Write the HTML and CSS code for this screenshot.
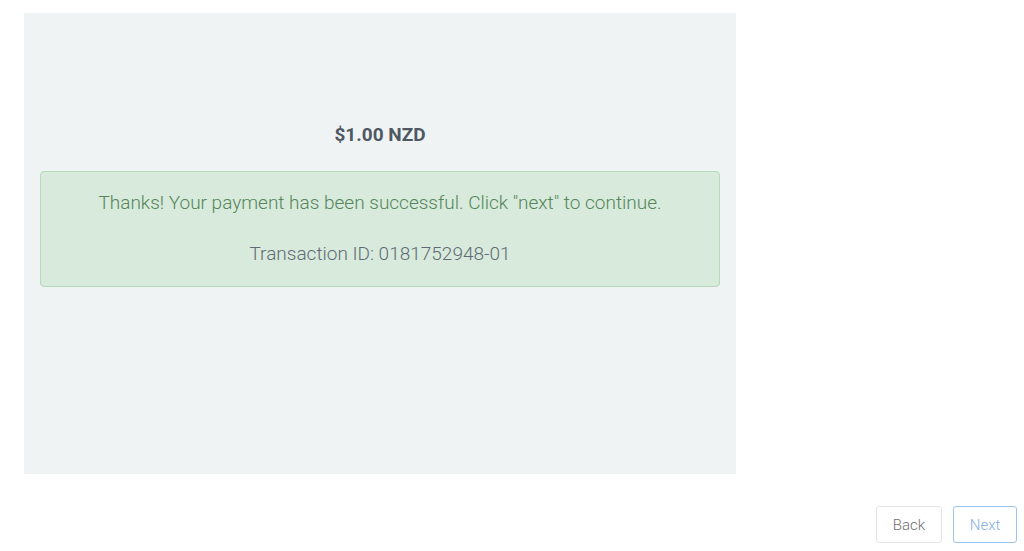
FILE: index.html
```html
<!DOCTYPE html>
<html>
<head>
<meta charset="utf-8">
<link rel="stylesheet" href="styles.css">
</head>
<body>
<div class="panel">
  <div class="amount">$1.00 NZD</div>
  <div class="alert">
    <p class="msg">Thanks! Your payment has been successful. Click "next" to continue.</p>
    <p class="txn">Transaction ID: 0181752948-01</p>
  </div>
</div>
<div class="actions">
  <button class="btn btn-back">Back</button>
  <button class="btn btn-next">Next</button>
</div>
</body>
</html>
```
FILE: styles.css
```css
html, body {
  margin: 0;
  padding: 0;
  background: #ffffff;
  font-family: Roboto, "Liberation Sans", sans-serif;
}
.panel {
  box-sizing: border-box;
  width: 712px;
  height: 461px;
  margin: 13px 0 0 24px;
  padding: 109px 16px 0 16px;
  background: #eff3f3;
}
.amount {
  text-align: center;
  font-size: 19px;
  font-weight: 700;
  line-height: 26px;
  color: #4f5862;
  margin-bottom: 23px;
}
.alert {
  box-sizing: border-box;
  width: 680px;
  padding: 16px 15px 17px;
  background: #d7eadb;
  border: 1px solid #b6d9b9;
  border-radius: 4px;
  text-align: center;
  font-size: 19px;
  font-weight: 300;
  line-height: 30px;
}
.alert p {
  margin: 0;
}
.msg {
  color: #55855a;
  margin-bottom: 21px !important;
}
.txn {
  color: #5f6a76;
}
.actions {
  display: flex;
  justify-content: flex-end;
  gap: 11px;
  margin-top: 32px;
  padding-right: 7px;
}
.btn {
  box-sizing: border-box;
  height: 37px;
  padding: 0;
  background: #ffffff;
  border-radius: 3px;
  font-family: Roboto, "Liberation Sans", sans-serif;
  font-size: 15px;
  font-weight: 300;
}
.btn-back {
  width: 66px;
  border: 1px solid #e3e6e8;
  color: #6f6f6f;
}
.btn-next {
  width: 64px;
  border: 1px solid #9cc3ef;
  color: #84ade4;
}
```
